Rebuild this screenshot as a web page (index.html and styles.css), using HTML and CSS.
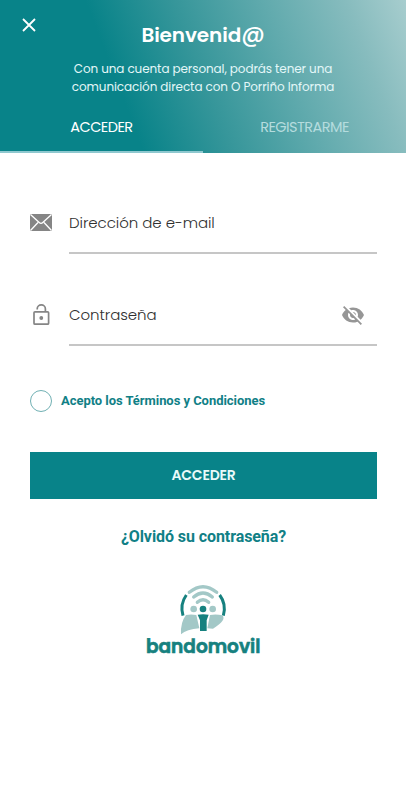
FILE: index.html
```
<!DOCTYPE html>
<html lang="es">
<head>
  <meta charset="UTF-8">
  <meta name="viewport" content="width=device-width, initial-scale=1.0">
  <title>Bienvenid@</title>
  <link rel="stylesheet" href="styles.css">
</head>
<body>

  <header class="header">
    <button type="button" class="close" aria-label="Cerrar">
      <svg width="14" height="14" viewBox="0 0 14 14">
        <path d="M1 1L13 13M13 1L1 13" fill="none" stroke="#fff" stroke-width="1.8" />
      </svg>
    </button>
    <h1>Bienvenid<span class="at">@</span></h1>
    <p class="intro">Con una cuenta personal, podrás tener una<br>comunicación directa con O Porriño Informa</p>
    <nav class="tabs">
      <a class="tab active">ACCEDER</a>
      <a class="tab register">REGISTRARME</a>
    </nav>
  </header>

  <form class="login">
    <div class="field">
      <svg class="icon" width="24" height="24" viewBox="0 0 24 24">
        <rect x="1" y="4" width="22" height="17" rx="1" fill="#858585" />
        <path d="M1.5 4.5L10.2 12.5Q12 14.3 13.8 12.5L22.5 4.5M1.5 20.5L9 12.5M22.5 20.5L15 12.5" fill="none" stroke="#fff" stroke-width="1.3" />
      </svg>
      <label class="input"><span>Dirección de e-mail</span></label>
    </div>

    <div class="field">
      <svg class="icon" width="24" height="24" viewBox="0 0 24 24">
        <rect x="5" y="9.800" width="14.600" height="12.400" rx="1" fill="none" stroke="#858585" stroke-width="1.700" />
        <path d="M8.200 7.500V7A4.100 4.100 0 0 1 16.400 7V9.500" fill="none" stroke="#858585" stroke-width="1.700" />
        <circle cx="12.300" cy="16" r="1.900" fill="#858585" />
      </svg>
      <label class="input">
        <span>Contraseña</span>
        <svg class="eye" width="24" height="24" viewBox="0 0 24 24">
          <path fill="#969696" d="M12 7c2.760 0 5 2.240 5 5 0 .650-.130 1.260-.360 1.830l2.920 2.920c1.510-1.260 2.700-2.890 3.430-4.750-1.730-4.390-6-7.500-11-7.500-1.400 0-2.740.250-3.980.700l2.160 2.160C10.740 7.130 11.350 7 12 7zM2 4.270l2.280 2.280.460.460C3.080 8.300 1.780 10.020 1 12c1.730 4.390 6 7.500 11 7.500 1.550 0 3.030-.300 4.380-.840l.420.420L19.730 22 21 20.730 3.270 3 2 4.270zM7.530 9.800l1.550 1.550c-.050.210-.080.430-.080.650 0 1.660 1.340 3 3 3 .220 0 .440-.030.650-.080l1.550 1.550c-.670.330-1.410.530-2.200.530-2.760 0-5-2.240-5-5 0-.790.200-1.530.530-2.200zm4.310-.780l3.150 3.150.020-.160c0-1.660-1.340-3-3-3l-.170.010z" />
        </svg>
      </label>
    </div>

    <div class="terms">
      <span class="radio"></span>
      <a>Acepto los Términos y Condiciones</a>
    </div>

    <button type="button" class="submit">ACCEDER</button>
    <a class="forgot">¿Olvidó su contraseña?</a>
  </form>

  <svg class="logo" width="136" height="90" viewBox="0 0 408 270">
    <!-- signal waves -->
    <g fill="none" stroke="#a3c8c7" stroke-width="10" stroke-linecap="round">
      <path d="M163 52Q204 18 245 52" />
      <path d="M176 66Q204 42 232 66" />
      <path d="M187 82Q204 66 221 82" />
    </g>
    <g fill="none" stroke="#16817f" stroke-width="9">
      <path d="M154 60Q134 88 144 122" />
      <path d="M254 60Q275 88 265 122" />
    </g>
    <!-- people -->
    <g fill="#a3c8c7">
      <circle cx="176" cy="102" r="10" />
      <circle cx="233" cy="102" r="10" />
      <path d="M153 120Q168 117 184 120L193 160Q155 163 138 178Q136 142 153 120Z" />
      <path d="M225 120Q244 117 262 121Q276 136 234 161L217 160Z" />
    </g>
    <g fill="#16817f">
      <circle cx="204" cy="102" r="10" />
      <path d="M188 119Q204 117 221 119L215 136V168H195V136Z" />
    </g>
    <text class="wordmark" x="33" y="234" textLength="343" lengthAdjust="spacingAndGlyphs">bandomovil</text>
  </svg>

</body>
</html>
```
FILE: styles.css
```
body {
  margin: 0;
  min-height: 800px;
  background: #fff;
  font-family: Poppins, Inter, sans-serif;
}

/* Header */
.header {
  position: relative;
  box-sizing: border-box;
  height: 153px;
  padding-top: 20px;
  display: flex;
  flex-direction: column;
  background: linear-gradient(69deg, #088389 31%, #36969a 50%, #60aaad 69%, #87bcbe 87%, #a7cdce 100%);
  color: #fff;
  text-align: center;
}

.close {
  position: absolute;
  left: 22px;
  top: 18px;
  padding: 0;
  border: none;
  background: none;
  line-height: 0;
}

h1 {
  margin: 0;
  font-size: 20px;
  line-height: 30px;
  font-weight: 600;
  letter-spacing: -0.1px;
}

.at {
  font-weight: 500;
  font-size: 23px;
  line-height: 20px;
}

.intro {
  margin: 10px 0 0;
  font-size: 12px;
  line-height: 18px;
  letter-spacing: -0.1px;
  color: #e4f7f8;
  white-space: nowrap;
}

.tabs {
  display: flex;
  flex: 1;
  margin-top: 7px;
}

.tab {
  flex: 1;
  box-sizing: border-box;
  padding-top: 15px;
  border-bottom: 2px solid transparent;
  font-size: 14.5px;
  line-height: 18px;
  letter-spacing: -0.55px;
}

.tab.active {
  border-bottom-color: #8fc8cf;
}

.tab.register {
  color: #b5dcde;
}

/* Form */
.login {
  display: flex;
  flex-direction: column;
  padding: 40px 29px 0 30px;
}

.field {
  display: flex;
  align-items: flex-start;
  height: 60px;
  margin-bottom: 32px;
}

.icon {
  width: 24px;
  margin: 17px 16px 0 -1px;
}

.input {
  flex: 1;
  box-sizing: border-box;
  height: 61px;
  display: flex;
  align-items: center;
  justify-content: space-between;
  border-bottom: 2px solid #c6c6c6;
  color: #303030;
  font-size: 15px;
  font-weight: 300;
  letter-spacing: -0.06px;
}

.eye {
  margin-right: 12px;
}

.terms {
  display: flex;
  align-items: center;
  height: 24px;
  margin-top: 12px;
  color: #108086;
  font: 700 13px/18px Roboto, sans-serif;
  letter-spacing: -0.05px;
}

.radio {
  box-sizing: border-box;
  width: 22px;
  height: 22px;
  margin-right: 9px;
  border: 1px solid #70b0b3;
  border-radius: 50%;
}

.submit {
  height: 47px;
  margin-top: 39px;
  padding: 0;
  border: none;
  background: #088389;
  color: #e9fafa;
  font-family: inherit;
  font-size: 14px;
  font-weight: 600;
  letter-spacing: -0.2px;
}

.forgot {
  margin-top: 28px;
  color: #108086;
  text-align: center;
  font: 700 16px/20px Roboto, sans-serif;
  letter-spacing: -0.08px;
}

.logo {
  display: block;
  margin: 28px auto 0;
}

.wordmark {
  fill: #16817f;
  stroke: #16817f;
  stroke-width: 2;
  font: 600 58px Poppins, Inter, sans-serif;
}
```
